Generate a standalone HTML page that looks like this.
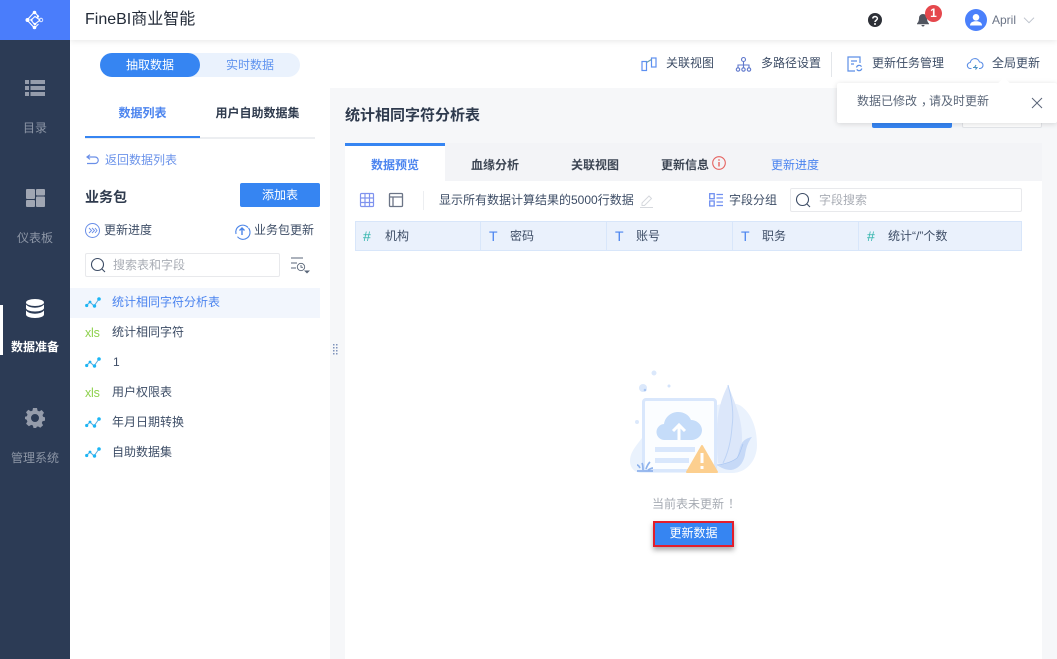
<!DOCTYPE html>
<html lang="zh-CN"><head><meta charset="utf-8"><title>FineBI</title>
<style>
*{box-sizing:border-box;margin:0;padding:0}
html,body{width:1057px;height:659px;overflow:hidden;background:#fff}
body{position:relative;font-family:"Liberation Sans","Noto Sans CJK SC",sans-serif;font-size:12px;color:#3d4d66}
.a{position:absolute}
.t{position:absolute;white-space:nowrap;line-height:16px;font-size:12px}
.c{text-align:center}
.b{font-weight:700}
svg{position:absolute;overflow:visible}
.nav{color:#8d96a6;width:70px;left:0;text-align:center}
.th{position:absolute;top:221px;height:30px;background:#eaf1fc;border:1px solid #d8e6fa;border-left:0}
.xls{color:#8fd14f;letter-spacing:-.2px;font-size:12.5px}
.p{position:relative;left:4px}
</style></head><body>

<div class="a" style="left:70px;top:0;width:987px;height:40px;background:#fff;box-shadow:0 1px 6px rgba(0,0,0,.1);z-index:2"></div>
<div class="a" style="left:330px;top:88px;width:727px;height:571px;background:#f6f7f9"></div>

<div class="a" style="left:0;top:0;width:70px;height:659px;background:#2c3b55;z-index:3"></div>
<div class="a" style="left:0;top:0;width:70px;height:40px;background:#4a7dfb;z-index:3"></div>
<div style="position:absolute;left:0;top:0;z-index:4;width:70px;height:659px">
<svg style="left:25px;top:10px" width="20" height="20" viewBox="0 0 20 20" fill="none" stroke="#fff" stroke-width="1.100"><path d="M9.500 2L2 10l7.500 8M9.500 2L13 6M6 10l4-3.500 5 3.500-5.500 4.500zM9.500 18l4-4"/><g fill="#fff" stroke="none"><circle cx="9.500" cy="2.500" r="1.800"/><circle cx="2.500" cy="10" r="2"/><circle cx="9.500" cy="17.500" r="1.800"/><circle cx="6.500" cy="10" r="1.200"/><circle cx="13" cy="6.500" r="1.200"/><circle cx="10" cy="14" r="1.300"/></g><circle cx="16" cy="10" r="1.800" stroke-width=".8"/></svg>
<svg style="left:25px;top:80px" width="20" height="16" fill="#959cab"><rect width="4" height="4" y="0"/><rect x="5.500" width="14.500" height="4"/><rect width="4" height="4" y="6"/><rect x="5.500" y="6" width="14.500" height="4"/><rect width="4" height="4" y="12"/><rect x="5.500" y="12" width="14.500" height="4"/></svg>
<div class="t nav" style="top:120px">目录</div>
<svg style="left:26px;top:189px" width="19" height="18" fill="#a0a6b3"><rect width="9" height="10" rx="1"/><rect x="10" width="9" height="6.500" rx="1"/><rect y="11" width="9" height="7" rx="1"/><rect x="10" y="7.500" width="9" height="10.500" rx="1"/></svg>
<div class="t nav" style="top:230px">仪表板</div>
<div class="a" style="left:0;top:305px;width:3px;height:50px;background:#fff"></div>
<svg style="left:26px;top:299px" width="18" height="19" fill="#fff"><ellipse cx="9" cy="3.500" rx="9" ry="3.500"/><path d="M0 5.500c2 2.300 5.500 3.200 9 3.200s7-.9 9-3.200v3.500c0 2-4 3.500-9 3.500S0 11 0 9z"/><path d="M0 11.500c2 2.300 5.500 3.200 9 3.200s7-.9 9-3.200v4c0 2-4 3.500-9 3.500s-9-1.500-9-3.500z"/></svg>
<div class="t nav b" style="top:339px;color:#fff">数据准备</div>
<svg style="left:25px;top:408px" width="20" height="20" viewBox="0 0 20 20"><path fill="#959cab" fill-rule="evenodd" d="M8 0h4l.6 2.700 1.700.7L16.700 2l2.300 2.800-1.500 2.300.6 1.700 1.900.6v3.200l-2.500.7-.7 1.700 1.300 2.300-2.800 2.500-2.300-1.400-1.700.6L11.500 20h-3l-.6-2.500-1.700-.6-2.300 1.400L1.100 15.800l1.300-2.300-.7-1.700L0 11V8.800l1.900-.6.6-1.700L1 4.200 3.300 1.800l2.400 1.500 1.700-.6zM10 6a4 4 0 100 8 4 4 0 000-8z"/></svg>
<div class="t nav" style="top:450px">管理系统</div>
</div>

<div class="t" style="left:85px;top:10px;font-size:16px;line-height:20px;color:#232b38;z-index:3">FineBI商业智能</div>
<svg style="left:868px;top:13px;z-index:3" width="14" height="14"><circle cx="7" cy="7" r="7" fill="#2d3037"/><path d="M4.700 5.500A2.400 2.400 0 017 3.500c1.500 0 2.400 1 2.400 2 0 1.800-2.300 1.700-2.300 3.500" fill="none" stroke="#fff" stroke-width="1.500"/><circle cx="7" cy="11" r="1" fill="#fff"/></svg>
<svg style="left:917px;top:14px;z-index:3" width="12" height="13" fill="#50555f"><path d="M6 0a4 4 0 014 4c0 3 1 4.500 2 5.500v.8H0v-.8C1 8.500 2 7 2 4a4 4 0 014-4z"/><path d="M4.500 11h3a1.500 1.500 0 01-3 0z"/></svg>
<div class="a c" style="left:925px;top:5px;width:17px;height:17px;border-radius:50%;background:#e5484d;color:#fff;font-size:12px;line-height:17px;z-index:4;text-align:center;font-weight:700">1</div>
<svg style="left:965px;top:9px;z-index:3" width="22" height="22"><circle cx="11" cy="11" r="11" fill="#4a80fb"/><circle cx="11" cy="8.300" r="3.300" fill="#fff"/><path d="M5 16.500c0-3 2.500-4.300 6-4.300s6 1.300 6 4.300z" fill="#fff"/></svg>
<div class="t" style="left:992px;top:12px;color:#6b7486;z-index:3">April</div>
<svg style="left:1023px;top:17px;z-index:3" width="12" height="7" fill="none" stroke="#bcc2cc"><path d="M1 .7l5 5 5-5"/></svg>

<div class="a" style="left:100px;top:53px;width:200px;height:24px;border-radius:12px;background:#eaf2fd"></div>
<div class="a" style="left:100px;top:53px;width:100px;height:24px;border-radius:12px;background:#3685f2"></div>
<div class="t c" style="left:100px;top:57px;width:100px;color:#fff">抽取数据</div>
<div class="t c" style="left:200px;top:57px;width:100px;color:#5f93ef">实时数据</div>

<svg style="left:641px;top:57px" width="16" height="15" fill="none" stroke="#5d90f1" stroke-width="1.200"><rect x="1" y="4.500" width="4.500" height="9"/><rect x="10.500" y="1" width="4.500" height="9"/><path d="M5.500 5.500l5-3" stroke="#6aa0b0"/></svg>
<div class="t" style="left:666px;top:55px">关联视图</div>
<svg style="left:736px;top:57px" width="15" height="15" fill="none" stroke="#5f78cc" stroke-width="1.100"><circle cx="7.500" cy="2.500" r="2"/><circle cx="2" cy="12.500" r="1.700"/><circle cx="7.500" cy="12.500" r="1.700"/><circle cx="13" cy="12.500" r="1.700"/><path d="M7.500 4.500v6M2 10.500V8h11v2.500"/></svg>
<div class="t" style="left:761px;top:55px">多路径设置</div>
<div class="a" style="left:831px;top:52px;width:1px;height:25px;background:#e3e6ea"></div>
<svg style="left:847px;top:56px" width="16" height="16" fill="none" stroke="#5d8fe6" stroke-width="1.200"><path d="M13 7V1H1v14h7"/><path d="M4 5h6M4 8h3"/><path d="M9.500 11.500a2.700 2.700 0 015-.8M14.800 12.500a2.700 2.700 0 01-5 .8"/></svg>
<div class="t" style="left:872px;top:55px">更新任务管理</div>
<svg style="left:967px;top:58px" width="16" height="13" fill="none" stroke="#5d8fe6" stroke-width="1.100"><path d="M4.500 10.500H3.500a3 3 0 01-.3-6 4.800 4.800 0 019.300-.5 3.200 3.200 0 01.5 6.500h-1"/><path d="M9 7l-1.500 2.500M6 9.500h4l-1.500 2" stroke="#4a90c2"/></svg>
<div class="t" style="left:992px;top:55px">全局更新</div>

<div class="t c" style="left:85px;top:105px;width:115px;color:#4b84ef;font-weight:700">数据列表</div>
<div class="t c" style="left:200px;top:105px;width:115px;color:#2e3a4d;font-weight:700">用户自助数据集</div>
<div class="a" style="left:85px;top:137px;width:230px;height:2px;background:#eceef1"></div>
<div class="a" style="left:85px;top:136px;width:115px;height:2px;background:#3685f2"></div>
<svg style="left:86px;top:154px" width="13" height="11" fill="none" stroke="#6a8fe8" stroke-width="1.200"><path d="M4 .7L1 3l3 2.300M1 3h8a3 3 0 010 6.500H1"/></svg>
<div class="t" style="left:105px;top:152px;color:#6b93ea">返回数据列表</div>
<div class="t b" style="left:85px;top:189px;font-size:14px;color:#2e3a4d">业务包</div>
<div class="a" style="left:240px;top:183px;width:80px;height:24px;border-radius:2px;background:#3685f2"></div>
<div class="t c" style="left:240px;top:187px;width:80px;color:#fff">添加表</div>
<svg style="left:85px;top:223px" width="15" height="15" fill="none" stroke="#6a8fe8"><circle cx="7.500" cy="7.500" r="7"/><path d="M4 5l2.500 2.500L4 10M7 5l2.500 2.500L7 10M10 5l2 2.500-2 2.500" stroke-width=".9"/></svg>
<div class="t" style="left:104px;top:222px">更新进度</div>
<svg style="left:234px;top:223px" width="16" height="16" fill="none" stroke="#4a84e8" stroke-width="1.100"><path d="M2 11a7 7 0 0112-6.500M14.500 5a7 7 0 01-11 8.700"/><path d="M8 12V5M5.500 7.500L8 5l2.500 2.500" stroke-width="1.400"/></svg>
<div class="t" style="left:254px;top:222px">业务包更新</div>
<div class="a" style="left:85px;top:253px;width:195px;height:24px;border:1px solid #e8e9ec;border-radius:2px;background:#fff"></div>
<svg style="left:91px;top:258px" width="15" height="15" fill="none" stroke="#3d4d66" stroke-width="1.100"><circle cx="6.500" cy="6.500" r="6"/><path d="M11 11l3 3"/></svg>
<div class="t" style="left:113px;top:257px;color:#a9adb5">搜索表和字段</div>
<svg style="left:291px;top:257px" width="20" height="18" fill="none" stroke="#5a6678" stroke-width=".9"><path d="M0 1h12M0 6h6M0 11h5"/><circle cx="10" cy="10" r="3.700"/><path d="M10 8v2.300h2"/><path d="M13 13.500h6l-3 3z" fill="#5a6678" stroke="none"/></svg>

<div class="a" style="left:70px;top:288px;width:250px;height:30px;background:#f2f6fd"></div>
<svg width="0" height="0" style="position:absolute"><defs><g id="ln"><path d="M1.500 8.500L5 5l4 4 5-7" fill="none" stroke="#5fa8d8" stroke-width="1"/><g fill="#1cb6f5"><circle cx="1.700" cy="8.500" r="1.600"/><circle cx="5" cy="5" r="1.400"/><circle cx="9.500" cy="9" r="1.700"/><circle cx="14" cy="2" r="1.800"/></g></g></defs></svg>
<svg style="left:85px;top:297px" width="16" height="12"><use href="#ln"/></svg>
<div class="t" style="left:112px;top:294px;color:#4b84ef">统计相同字符分析表</div>
<div class="t xls" style="left:85px;top:325px">xls</div>
<div class="t" style="left:112px;top:324px">统计相同字符</div>
<svg style="left:85px;top:357px" width="16" height="12"><use href="#ln"/></svg>
<div class="t" style="left:113px;top:354px">1</div>
<div class="t xls" style="left:85px;top:385px">xls</div>
<div class="t" style="left:112px;top:384px">用户权限表</div>
<svg style="left:85px;top:417px" width="16" height="12"><use href="#ln"/></svg>
<div class="t" style="left:112px;top:414px">年月日期转换</div>
<svg style="left:85px;top:447px" width="16" height="12"><use href="#ln"/></svg>
<div class="t" style="left:112px;top:444px">自助数据集</div>

<svg style="left:332px;top:344px" width="6" height="12" fill="#7f93bb"><g><rect x="1" y="0" width="1.500" height="1.500"/><rect x="4" y="0" width="1.500" height="1.500"/><rect x="1" y="3" width="1.500" height="1.500"/><rect x="4" y="3" width="1.500" height="1.500"/><rect x="1" y="6" width="1.500" height="1.500"/><rect x="4" y="6" width="1.500" height="1.500"/><rect x="1" y="9" width="1.500" height="1.500"/><rect x="4" y="9" width="1.500" height="1.500"/></g></svg>

<div class="t b" style="left:345px;top:106px;font-size:15px;line-height:20px;color:#2e3a4d">统计相同字符分析表</div>
<div class="a" style="left:872px;top:118px;width:80px;height:10px;background:#3685f2;border-radius:2px"></div>
<div class="a" style="left:962px;top:118px;width:80px;height:10px;background:#fff;border:1px solid #e3e5e9;border-top:0;border-radius:2px"></div>

<div class="a" style="left:837px;top:83px;width:220px;height:40px;background:#fff;box-shadow:0 1px 6px rgba(0,0,0,.14);border-radius:2px;z-index:5"></div>
<div class="a" style="left:1000px;top:79px;width:8px;height:8px;background:#fff;transform:rotate(45deg);z-index:5"></div>
<div class="t" style="left:857px;top:93px;z-index:6;color:#5a6678">数据已修改<span class="p">，</span>请及时更新</div>
<svg style="left:1032px;top:98px;z-index:6" width="10" height="10" fill="none" stroke="#5a6678"><path d="M0 0l10 10M10 0L0 10"/></svg>

<div class="a" style="left:345px;top:143px;width:697px;height:516px;background:#fff"></div>
<div class="a" style="left:445px;top:143px;width:597px;height:38px;background:#f3f4f7"></div>
<div class="a" style="left:345px;top:143px;width:100px;height:3px;background:#3685f2"></div>
<div class="t b c" style="left:345px;top:157px;width:100px;color:#4b84ef">数据预览</div>
<div class="t b c" style="left:445px;top:157px;width:100px;color:#3d4654">血缘分析</div>
<div class="t b c" style="left:545px;top:157px;width:100px;color:#3d4654">关联视图</div>
<div class="t b" style="left:661px;top:157px;color:#3d4654">更新信息</div>
<svg style="left:712px;top:156px" width="14" height="14" fill="none" stroke="#e5625f" stroke-width="1.100"><circle cx="7" cy="7" r="6.300"/><path d="M7 6v4.500M7 3.300v1.500" stroke-width="1.400"/></svg>
<div class="t c" style="left:745px;top:157px;width:100px;color:#4b84ef">更新进度</div>

<svg style="left:360px;top:193px" width="14" height="14" fill="none" stroke="#7f93ee" stroke-width="1.200"><rect x=".5" y=".5" width="13" height="13" rx="1"/><path d="M.5 5h13M.5 9.500h13M5 .5v13M9.500 .5v13"/></svg>
<svg style="left:389px;top:193px" width="14" height="14" fill="none" stroke="#6b7486" stroke-width="1.300"><rect x=".5" y=".5" width="13" height="13" rx="1"/><path d="M.5 4h13M4 4v9.500"/></svg>
<div class="a" style="left:423px;top:191px;width:1px;height:19px;background:#eceef1"></div>
<div class="t" style="left:439px;top:192px">显示所有数据计算结果的5000行数据</div>
<svg style="left:640px;top:194px" width="13" height="14" fill="none" stroke="#d5d8dd"><path d="M2 9L9 2l2.500 2.500L4.500 11.500H2zM0 13.500h13"/></svg>
<svg style="left:709px;top:193px" width="14" height="14" fill="none" stroke="#6f8ff0" stroke-width="1.300"><rect x=".7" y=".7" width="4.500" height="5"/><rect x=".7" y="8" width="4.500" height="5"/><path d="M7.500 1.500H14M7.500 5H14M7.500 9H14M7.500 12.500H14"/></svg>
<div class="t" style="left:729px;top:192px">字段分组</div>
<div class="a" style="left:790px;top:188px;width:232px;height:24px;border:1px solid #e8e9ec;border-radius:2px;background:#fff"></div>
<svg style="left:796px;top:193px" width="15" height="15" fill="none" stroke="#3d4d66" stroke-width="1.100"><circle cx="6.500" cy="6.500" r="6"/><path d="M11 11l3 3"/></svg>
<div class="t" style="left:819px;top:192px;color:#a9adb5">字段搜索</div>

<div class="th" style="left:355px;width:126px;border-left:1px solid #d8e6fa"></div>
<div class="th" style="left:481px;width:126px"></div>
<div class="th" style="left:607px;width:126px"></div>
<div class="th" style="left:733px;width:126px"></div>
<div class="th" style="left:859px;width:163px"></div>
<div class="t" style="left:363px;top:228px;color:#30b4ab;font-size:14px">#</div><div class="t" style="left:385px;top:228px">机构</div>
<div class="t" style="left:489px;top:228px;color:#4b84ef;font-size:14px">T</div><div class="t" style="left:510px;top:228px">密码</div>
<div class="t" style="left:615px;top:228px;color:#4b84ef;font-size:14px">T</div><div class="t" style="left:636px;top:228px">账号</div>
<div class="t" style="left:741px;top:228px;color:#4b84ef;font-size:14px">T</div><div class="t" style="left:762px;top:228px">职务</div>
<div class="t" style="left:867px;top:228px;color:#30b4ab;font-size:14px">#</div><div class="t" style="left:888px;top:228px">统计“/”个数</div>

<svg style="left:610px;top:360px" width="170" height="120" viewBox="0 0 170 120">
<path d="M32 78C26 86 20 92 20 101c0 7 5 12 12 12h90c14 0 25-12 25-28 0-18-6-32-16-39-6-4-15-3-24-1H32z" fill="#eaf2fd"/>
<circle cx="44" cy="13" r="2.500" fill="#dbe8fb"/><circle cx="33" cy="28" r="4" fill="#dbe8fb"/><circle cx="35" cy="30" r="1.300" fill="#a9c6f2"/><circle cx="59" cy="26" r="1.500" fill="#d4e4fb"/><circle cx="27" cy="62" r="2" fill="#dbe8fb"/>
<path d="M118 25c-7 14-11 28-11 45 0 13 0 25 1 33l12 4c8-8 12-18 12-30 0-20-8-36-14-52z" fill="#dce7fa"/>
<path d="M118 25c4 14 6 28 4 42-1 14-4 26-9 36" stroke="#bdd3f5" fill="none"/>
<path d="M142 77c-5 1-8 3-10 6-3 5-3 10-5 15-5 4-12 6-20 7 4 3 9 5 14 5 7-1 12-6 14-15 1-7 3-13 7-18z" fill="#c6d9f7"/>
<path d="M107 105c8-1 15-3 20-7 3-4 4-9 6-14" stroke="#a9c6f2" fill="none" stroke-width=".7"/>
<rect x="33.500" y="39.500" width="72" height="71" rx="2.500" fill="#fbfdff" stroke="#d9e7fc" stroke-width="3"/>
<path d="M55 80a8 8 0 01-1-16c1-7 7-12 14-12 6 0 11 3 13 8 6 0 11 5 11 10 0 6-5 10-11 10z" fill="#c5dcf9"/>
<path d="M69 80V65M63 71l6-6 6 6" stroke="#fff" stroke-width="3" fill="none"/>
<rect x="45" y="87" width="40" height="5" fill="#d9e7fc"/><rect x="45" y="98" width="34" height="5" fill="#d9e7fc"/>
<path d="M92 86L77 112h30z" fill="#fccf8f" stroke="#fccf8f" stroke-width="2" stroke-linejoin="round"/>
<path d="M92 93v10M92 106v3" stroke="#fff" stroke-width="3"/>
<path d="M30 108c-1-2-2-3-3-3M33 110c0-3 0-5-1-7M36 109c1-3 2-5 4-7M38 110c2-1 3-2 5-2M27 111h16" stroke="#8eb2ec" stroke-width="1.700" fill="none"/>
</svg>
<div class="t" style="left:652px;top:496px;color:#a6abb3">当前表未更新<span class="p">！</span></div>
<div class="a" style="left:653px;top:521px;width:81px;height:26px;background:#3685f2;border:2px solid #e21e2c;box-shadow:0 3px 5px rgba(0,0,0,.35)"></div>
<div class="t c" style="left:653px;top:525px;width:81px;color:#fff">更新数据</div>

</body></html>
